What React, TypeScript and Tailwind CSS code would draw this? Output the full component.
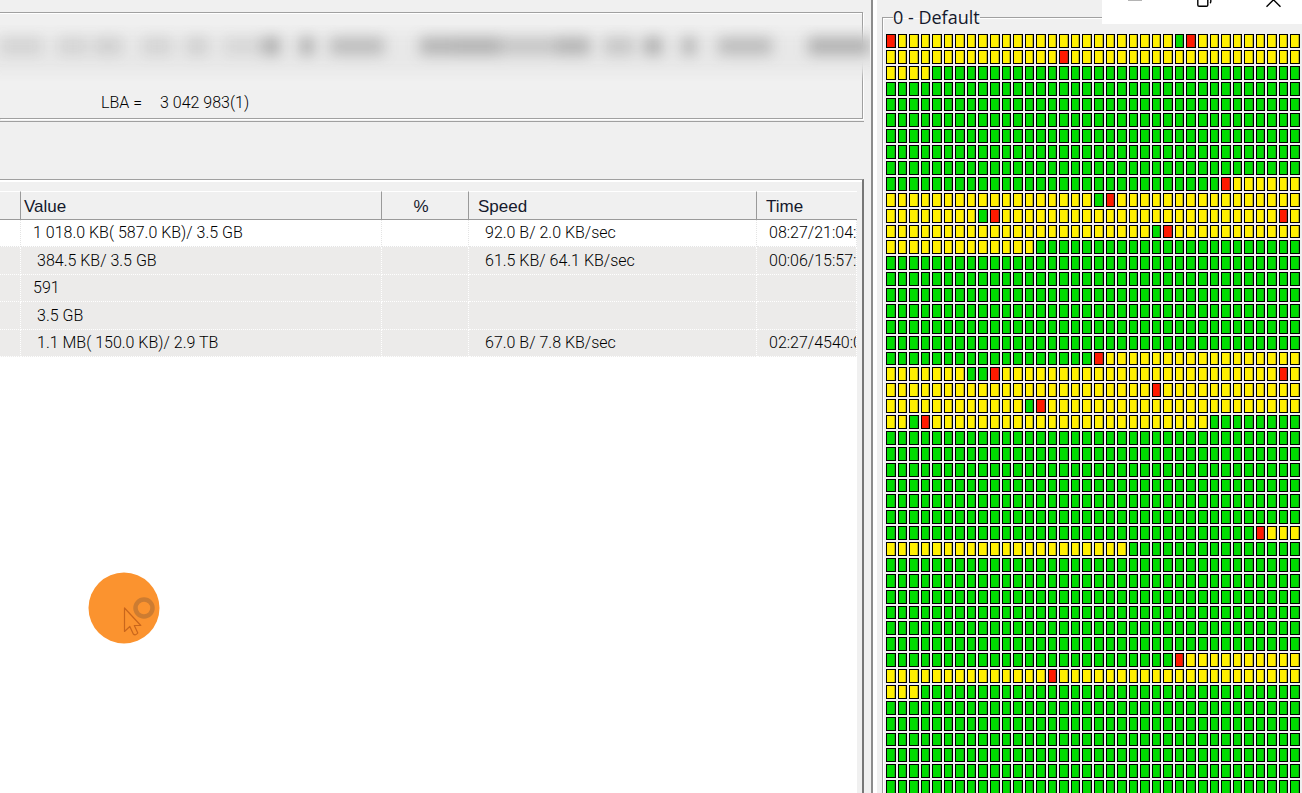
import clsx from 'clsx';

type CellState = 'r' | 'g' | 'y';

interface TransferRow {
  value: string;
  percent: string;
  speed: string;
  time: string;
  indent?: boolean;
}

const COLUMNS = 36;
const ALL_GREEN = 'g36';

const transfers: TransferRow[] = [
  { value: '1 018.0 KB( 587.0 KB)/ 3.5 GB', percent: '', speed: '92.0 B/ 2.0 KB/sec', time: '08:27/21:04:' },
  { value: '384.5 KB/ 3.5 GB', percent: '', speed: '61.5 KB/ 64.1 KB/sec', time: '00:06/15:57:', indent: true },
  { value: '591', percent: '', speed: '', time: '' },
  { value: '3.5 GB', percent: '', speed: '', time: '', indent: true },
  { value: '1.1 MB( 150.0 KB)/ 2.9 TB', percent: '', speed: '67.0 B/ 7.8 KB/sec', time: '02:27/4540:0', indent: true },
];

// Each map row is a list of runs: state letter followed by its length
const mapRows: string[] = [
  'r1 y24 g1 r1 y9',
  'y15 r1 y20',
  'y4 g32',
  ...Array(6).fill(ALL_GREEN),
  'g29 r1 y6',
  'y18 g1 r1 y16',
  'y8 g1 r1 y24 r1 y1',
  'y23 g1 r1 y11',
  'y13 g23',
  ...Array(6).fill(ALL_GREEN),
  'g18 r1 y17',
  'y7 g2 r1 y24 r1 y1',
  'y23 r1 y12',
  'y12 g1 r1 y22',
  'y2 g1 r1 y24 g8',
  ...Array(6).fill(ALL_GREEN),
  'g32 r1 y3',
  'y21 g15',
  ...Array(6).fill(ALL_GREEN),
  'g25 r1 y10',
  'y14 r1 y21',
  'y3 g33',
  ...Array(6).fill(ALL_GREEN),
];

const cells = mapRows.flatMap((row) =>
  row
    .split(' ')
    .flatMap((run) => Array<CellState>(Number(run.slice(1))).fill(run[0] as CellState))
    .slice(0, COLUMNS)
);

const cellColors: Record<CellState, string> = {
  r: 'bg-[#ff1a00]',
  g: 'bg-[#00dc00]',
  y: 'bg-[#fff000]',
};

// gap before, width and darkness of every smudge in the hidden line
const smudges = [
  [0, 42, 0.12], [16, 30, 0.12], [6, 28, 0.14], [20, 30, 0.12], [14, 22, 0.14], [16, 36, 0.1],
  [2, 18, 0.34], [20, 14, 0.34], [16, 54, 0.26], [36, 34, 0.3], [0, 46, 0.32], [0, 56, 0.2],
  [0, 34, 0.3], [14, 30, 0.2], [10, 18, 0.34], [20, 14, 0.3], [22, 54, 0.26], [36, 62, 0.32],
];

const HiddenLine = () => (
  <div aria-hidden="true" className="absolute top-3 left-0 -right-2 h-14 overflow-hidden">
    <div className="absolute -inset-x-3 top-2 bottom-2 bg-[#e8e8e8] blur-[6px]" />
    <div className="absolute inset-x-0 top-3 flex blur-[7px]">
      {smudges.map(([gap, width, opacity], i) => (
        <span key={i} className="h-[18px] shrink-0 bg-[#404040]" style={{ marginLeft: gap, width, opacity }} />
      ))}
    </div>
  </div>
);

const TransferTable = () => (
  <table className="w-full table-fixed border-separate border-spacing-0 text-left">
    <colgroup>
      <col className="w-[21px]" />
      <col className="w-[361px]" />
      <col className="w-[87px]" />
      <col className="w-[288px]" />
      <col />
    </colgroup>
    <thead>
      <tr className="h-[29px] bg-[#f0f0f0] text-[17px] leading-5 text-[#15192c] *:border-t *:border-t-white *:border-b *:border-b-[#9a9a9a] *:p-0 *:pt-[2px] *:font-normal">
        <th className="border-r border-r-[#9a9a9a]" aria-label="Name" />
        <th className="border-r border-r-[#9a9a9a]">
          <span className="pl-[3px]">Value</span>
        </th>
        <th className="border-r border-r-[#9a9a9a] text-center">
          <span className="pr-2">%</span>
        </th>
        <th className="border-r border-r-[#9a9a9a]">
          <span className="pl-[9px]">Speed</span>
        </th>
        <th>
          <span className="pl-[9px]">Time</span>
        </th>
      </tr>
    </thead>
    <tbody className="font-['Roboto',sans-serif] text-[16px] leading-5 font-light whitespace-nowrap text-black">
      {transfers.map((row, i) => (
        <tr
          key={row.value}
          className={clsx(
            'odd:h-[27px] even:h-[28px] *:overflow-hidden *:border-r *:border-b *:border-dotted *:py-0 *:pr-0',
            i === 0 ? 'bg-white *:border-[#e4e4e4]' : 'bg-[#ecebea] *:border-white'
          )}
        >
          <td />
          <td className={row.indent ? 'pl-4' : 'pl-3'}>{row.value}</td>
          <td>{row.percent}</td>
          <td className="pl-4">{row.speed}</td>
          <td className="pl-3">{row.time}</td>
        </tr>
      ))}
    </tbody>
  </table>
);

const WindowControls = () => (
  <div className="absolute top-0 right-0 flex h-6 w-[200px] overflow-hidden bg-white text-black">
    <button type="button" aria-label="Minimize" className="flex w-[68px] shrink-0 justify-center">
      <svg width="16" height="8" viewBox="0 0 16 8" fill="none">
        <path d="M0 0.5H14" stroke="#b4b4b4" />
      </svg>
    </button>
    <button type="button" aria-label="Restore" className="flex w-[68px] shrink-0 justify-center">
      <svg width="16" height="8" viewBox="0 0 16 8" fill="none" stroke="currentColor" strokeWidth="1.4">
        <path d="M1.8 -3V5Q1.8 6.3 3.1 6.3H10.5Q11.8 6.3 11.8 5V-3" />
        <path d="M14.8 -3V1.5Q14.8 2.7 14 3.2" />
      </svg>
    </button>
    <button type="button" aria-label="Close" className="flex w-[68px] shrink-0 justify-center">
      <svg width="18" height="8" viewBox="0 0 18 8" fill="none" stroke="currentColor" strokeWidth="1.4">
        <path d="M3.5 6.8L17.5 -7.2M3.5 -7.2L17.5 6.8" />
      </svg>
    </button>
  </div>
);

const BusyPointer = () => (
  <svg className="absolute top-[572px] left-[88px]" width="72" height="72" viewBox="0 0 72 72" aria-hidden="true">
    <circle cx="36" cy="36" r="35.5" fill="#fb932f" />
    <circle cx="56" cy="36" r="8.5" fill="none" stroke="#cd7c31" strokeWidth="4.5" />
    <path
      d="M36.5 36V59.5L41.8 54.5L45.3 62Q47.5 64 49.8 61L46.3 53.5H52.8Z"
      fill="none"
      stroke="#c9661c"
      strokeWidth="1.2"
      strokeLinejoin="round"
    />
  </svg>
);

const SectorMap = () => (
  <fieldset className="ml-[5px] min-w-0 border-t border-l border-[#a0a0a0] pr-[2px] pl-[3px] shadow-[inset_1px_1px_0_#ffffff]">
    <legend className="ml-[7px] font-['Open_Sans',sans-serif] text-[18px] leading-5 text-[#15192c]">0 - Default</legend>
    <div className="mt-[7px] grid h-[760px] grid-cols-[repeat(36,minmax(0,1fr))] grid-rows-[repeat(48,minmax(0,1fr))] gap-[2px] bg-[#f3f0f3]">
      {cells.map((state, i) => (
        <span
          key={i}
          className={clsx('border border-black shadow-[inset_-1px_0_0_rgba(60,60,60,0.35)]', cellColors[state])}
        />
      ))}
    </div>
  </fieldset>
);

export default function App() {
  return (
    <div className="relative flex h-screen overflow-hidden bg-[#f0f0f0] font-['Liberation_Sans',sans-serif]">
      <main className="flex min-w-0 flex-1 flex-col pt-3">
        <section className="relative mr-2 h-[107px] border-t border-r border-b border-[#a0a0a0] shadow-[inset_0_1px_0_#ffffff,1px_1px_0_#ffffff]">
          <HiddenLine />
          <p className="flex gap-[18px] pt-20 pl-[101px] font-['Roboto',sans-serif] text-[16px] leading-5 font-light text-black">
            <span>LBA =</span>
            <span>3 042 983(1)</span>
          </p>
        </section>
        <div className="mt-[2px] mr-[7px] h-[58px] shrink-0 border-t border-[#a0a0a0]" />
        <section className="mr-[7px] flex min-h-0 flex-1 flex-col border-t border-r-2 border-t-[#a0a0a0] border-r-[#777777] pt-[11px] pr-[5px] shadow-[inset_0_2px_0_#ffffff]">
          <div className="flex-1 overflow-hidden bg-white">
            <TransferTable />
          </div>
        </section>
      </main>
      <div className="w-[5px] shrink-0 border-l-2 border-[#8c8c8c] bg-white" />
      <aside className="w-[426px] shrink-0 border-l border-white pt-[7px]">
        <SectorMap />
      </aside>
      <WindowControls />
      <BusyPointer />
    </div>
  );
}
